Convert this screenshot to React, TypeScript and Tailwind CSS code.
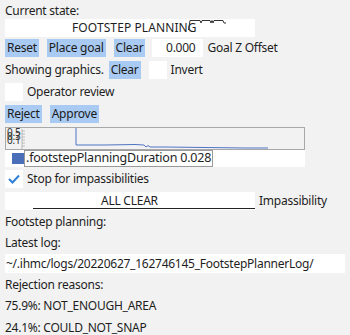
import React from 'react';

const font = { fontFamily: '"Noto Sans", "Open Sans", sans-serif' };

const Btn = ({ children }: { children: React.ReactNode }) => (
  <div className="h-[18px] px-[2px] flex items-center bg-[#a9caf2] text-[#1a1a1a] leading-none">{children}</div>
);

const Box = () => <div className="w-[18px] h-[18px] bg-white shrink-0" />;

export default function App() {
  return (
    <div className="w-[350px] h-[335px] bg-[#f2f2f2] text-[12px] tracking-[-0.25px] text-[#1e1e1e] overflow-hidden pl-[5px]" style={font}>
      {/* state */}
      <div className="h-[19px] pt-[2px] flex items-center">Current state:</div>
      <div className="relative w-[250px] h-[18px] bg-white flex items-center">
        <span className="ml-[67px] tracking-[0.1px]">FOOTSTEP PLANNING</span>
        <svg className="absolute left-[183px] top-0" width="46" height="12" viewBox="0 0 46 12">
          <polyline fill="none" stroke="#333" strokeWidth="1"
            points="0.5,11 2,1.5 12,1.5 13,4 14,1.5 22,1.5 23,4 24,1.5 25,4 26,1.5 35,1.5 36,4 38,4" />
        </svg>
      </div>

      {/* goal */}
      <div className="mt-[2px] h-[18px] flex items-center">
        <Btn>Reset</Btn>
        <div className="ml-[8px]"><Btn>Place goal</Btn></div>
        <div className="ml-[8px]"><Btn>Clear</Btn></div>
        <div className="ml-[7px] w-[51px] h-[18px] bg-white flex items-center justify-end pr-[8px]">0.000</div>
        <span className="ml-[4px]">Goal Z Offset</span>
      </div>

      {/* graphics */}
      <div className="mt-[4px] h-[18px] flex items-center">
        <span>Showing graphics.</span>
        <div className="ml-[5px]"><Btn>Clear</Btn></div>
        <div className="ml-[8px]"><Box /></div>
        <span className="ml-[4px]">Invert</span>
      </div>

      {/* operator */}
      <div className="mt-[4px] h-[18px] flex items-center">
        <Box />
        <span className="ml-[4px]">Operator review</span>
      </div>
      <div className="mt-[4px] h-[17px] flex items-center">
        <Btn>Reject</Btn>
        <div className="ml-[8px]"><Btn>Approve</Btn></div>
      </div>

      {/* chart */}
      <div className="mt-[4px] w-[300px] h-[24px] relative">
        <svg width="300" height="24" viewBox="0 0 300 24" className="block">
          <rect x="0.5" y="1.5" width="299" height="22" fill="none" stroke="#a8a8a8" />
          <g fontSize="10" fill="#333" style={font}>
            <text x="2" y="10">0.5</text>
            <text x="2" y="14">0.3</text>
            <text x="2" y="18">0.1</text>
          </g>
          <g stroke="#999" strokeWidth="0.6">
            <line x1="17" y1="3" x2="17" y2="23" />
            <line x1="17" y1="5" x2="20" y2="5" />
            <line x1="17" y1="8" x2="20" y2="8" />
            <line x1="17" y1="11" x2="20" y2="11" />
            <line x1="17" y1="14" x2="20" y2="14" />
            <line x1="17" y1="17" x2="20" y2="17" />
            <line x1="17" y1="20" x2="20" y2="20" />
          </g>
          <polyline fill="none" stroke="#4f74c2" strokeWidth="1"
            points="71,2 71,19 100,19 130,18.5 139,19 141,21 143,19.5 145,21 160,21 200,21.5 240,22 263,22" />
        </svg>
      </div>

      {/* legend */}
      <div className="w-[300px] h-[17px] bg-white flex items-center">
        <div className="ml-[7px] w-[12px] h-[11px] bg-[#4a6fb8]" />
        <div className="h-[17px] border border-[#9a9a9a] px-[1px] flex items-center text-[12.5px] tracking-[-0.2px]">.footstepPlanningDuration 0.028</div>
      </div>

      {/* impassibilities */}
      <div className="mt-[3px] h-[18px] flex items-center">
        <div className="w-[18px] h-[18px] bg-white flex items-center justify-center">
          <svg width="12" height="10" viewBox="0 0 12 10">
            <polyline points="1,5 4.5,8.5 11,1.5" fill="none" stroke="#2f7fd8" strokeWidth="2" />
          </svg>
        </div>
        <span className="ml-[4px]">Stop for impassibilities</span>
      </div>
      <div className="mt-[4px] h-[18px] flex items-center">
        <div className="relative w-[250px] h-[18px] bg-white flex items-center">
          <span className="ml-[96px]">ALL CLEAR</span>
          <div className="absolute left-[28px] right-0 bottom-[1px] h-px bg-[#222]" />
        </div>
        <span className="ml-[4px]">Impassibility</span>
      </div>

      {/* planning */}
      <div className="h-[22px] pt-[2px] flex items-center">Footstep planning:</div>
      <div className="h-[22px] flex items-center">Latest log:</div>
      <div className="w-[340px] h-[19px] bg-white flex items-center pl-[1px]">~/.ihmc/logs/20220627_162746145_FootstepPlannerLog/</div>
      <div className="h-[22px] pt-[2px] flex items-center">Rejection reasons:</div>
      <div className="h-[22px] flex items-center">75.9%: NOT_ENOUGH_AREA</div>
      <div className="h-[22px] flex items-center">24.1%: COULD_NOT_SNAP</div>
    </div>
  );
}
